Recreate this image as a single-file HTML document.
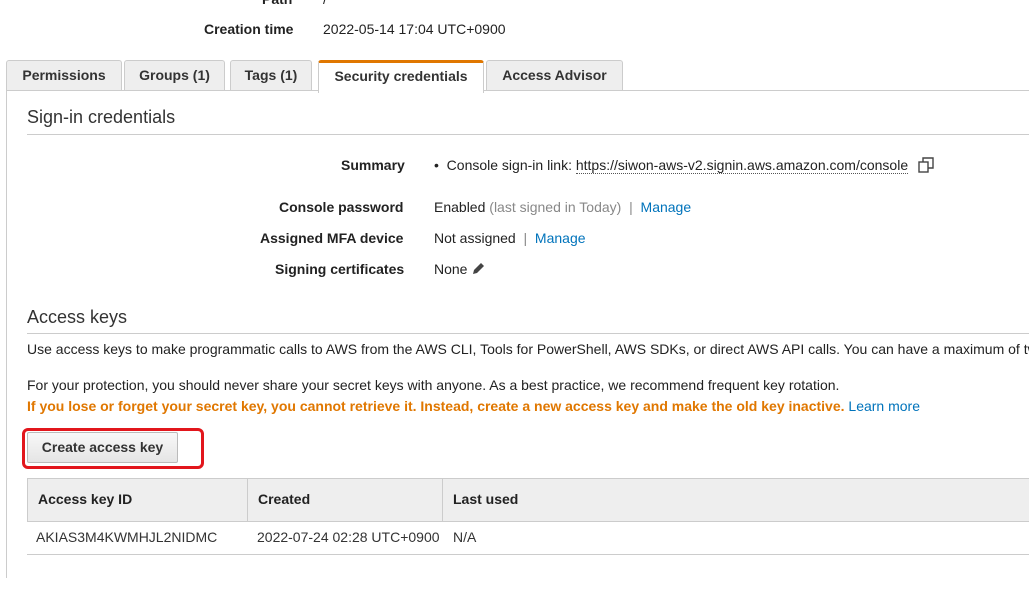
<!DOCTYPE html><html><head><style>
body{margin:0;width:1029px;height:589px;background:#fff;font-family:"Liberation Sans",Arial,sans-serif;font-size:14px;color:#222;position:relative;overflow:hidden}
.a{position:absolute;white-space:nowrap}
.b{font-weight:bold}
.tab{position:absolute;top:60px;height:29px;background:#eee;border:1px solid #ccc;border-bottom:none;border-radius:3px 3px 0 0;font-weight:bold;text-align:center;line-height:29px;color:#333}
.lk{color:#0073bb}
.g{color:#888}
h2{position:absolute;margin:0;font-weight:normal;font-size:18px;color:#333}
.hr{position:absolute;height:1px;background:#ccc}
</style></head><body>
<div class="a b" style="left:262px;top:-9px">Path</div><div class="a" style="left:323px;top:-9px">/</div>
<div class="a b" style="left:204px;top:21px">Creation time</div>
<div class="a" style="left:323px;top:21px">2022-05-14 17:04 UTC+0900</div>
<div class="tab" style="left:6px;width:114px">Permissions</div>
<div class="tab" style="left:124px;width:99px">Groups (1)</div>
<div class="tab" style="left:230px;width:80px">Tags (1)</div>
<div class="tab" style="left:318px;top:60px;width:164px;height:30px;background:#fff;border-top:3px solid #e07700;line-height:27px">Security credentials</div>
<div class="tab" style="left:486px;width:135px">Access Advisor</div>
<div class="hr" style="left:6px;top:90px;width:312px"></div>
<div class="hr" style="left:484px;top:90px;width:545px"></div>
<div style="position:absolute;left:6px;top:90px;width:1px;height:488px;background:#ccc"></div>
<h2 style="left:27px;top:107px">Sign-in credentials</h2>
<div class="hr" style="left:27px;top:134px;width:1002px"></div>
<div class="a b" style="left:341px;top:157px">Summary</div>
<div class="a" style="left:434px;top:157px">•&nbsp; Console sign-in link: <span style="border-bottom:1px dotted #555">https://siwon-aws-v2.signin.aws.amazon.com/console</span>
<svg width="16" height="16" style="vertical-align:-3px;margin-left:6px" fill="none" stroke="#444" stroke-width="1.4"><rect x="1" y="5" width="9" height="10"/><path d="M5 5V1h10v10h-5"/></svg></div>
<div class="a b" style="left:279px;top:199px">Console password</div>
<div class="a" style="left:434px;top:199px">Enabled <span class="g">(last signed in Today)</span> <span class="g">&nbsp;|&nbsp;</span> <span class="lk">Manage</span></div>
<div class="a b" style="left:260px;top:230px">Assigned MFA device</div>
<div class="a" style="left:434px;top:230px">Not assigned <span class="g">&nbsp;|&nbsp;</span> <span class="lk">Manage</span></div>
<div class="a b" style="left:275px;top:261px">Signing certificates</div>
<div class="a" style="left:434px;top:261px">None <svg width="14" height="14" style="vertical-align:-2px"><path d="M2 12l1-4 7-7 3 3-7 7z" fill="#444"/></svg></div>
<h2 style="left:27px;top:307px">Access keys</h2>
<div class="hr" style="left:27px;top:333px;width:1002px"></div>
<div class="a" style="left:27px;top:341px">Use access keys to make programmatic calls to AWS from the AWS CLI, Tools for PowerShell, AWS SDKs, or direct AWS API calls. You can have a maximum of two</div>
<div class="a" style="left:27px;top:377px">For your protection, you should never share your secret keys with anyone. As a best practice, we recommend frequent key rotation.</div>
<div class="a b" style="left:27px;top:398px;color:#e07700">If you lose or forget your secret key, you cannot retrieve it. Instead, create a new access key and make the old key inactive. <span class="lk" style="font-weight:normal">Learn more</span></div>
<div class="a b" style="left:27px;top:432px;width:149px;height:29px;border:1px solid #bbb;border-radius:2px;background:linear-gradient(#f8f8f8,#e5e5e5);text-align:center;line-height:29px;color:#333">Create access key</div>
<div style="position:absolute;left:22px;top:428px;width:176px;height:35px;border:3px solid #e2161c;border-radius:6px"></div>
<div style="position:absolute;left:27px;top:478px;width:1002px;height:42px;background:#eee;border-top:1px solid #ccc;border-bottom:1px solid #ccc"></div>
<div style="position:absolute;left:27px;top:478px;width:1px;height:43px;background:#ccc"></div>
<div style="position:absolute;left:247px;top:478px;width:1px;height:43px;background:#ccc"></div>
<div style="position:absolute;left:442px;top:478px;width:1px;height:43px;background:#ccc"></div>
<div class="a b" style="left:38px;top:491px">Access key ID</div>
<div class="a b" style="left:258px;top:491px">Created</div>
<div class="a b" style="left:453px;top:491px">Last used</div>
<div class="a" style="left:36px;top:529px;color:#333">AKIAS3M4KWMHJL2NIDMC</div>
<div class="a" style="left:257px;top:529px;color:#333">2022-07-24 02:28 UTC+0900</div>
<div class="a" style="left:453px;top:529px;color:#333">N/A</div>
<div class="hr" style="left:27px;top:554px;width:1002px"></div>
</body></html>
